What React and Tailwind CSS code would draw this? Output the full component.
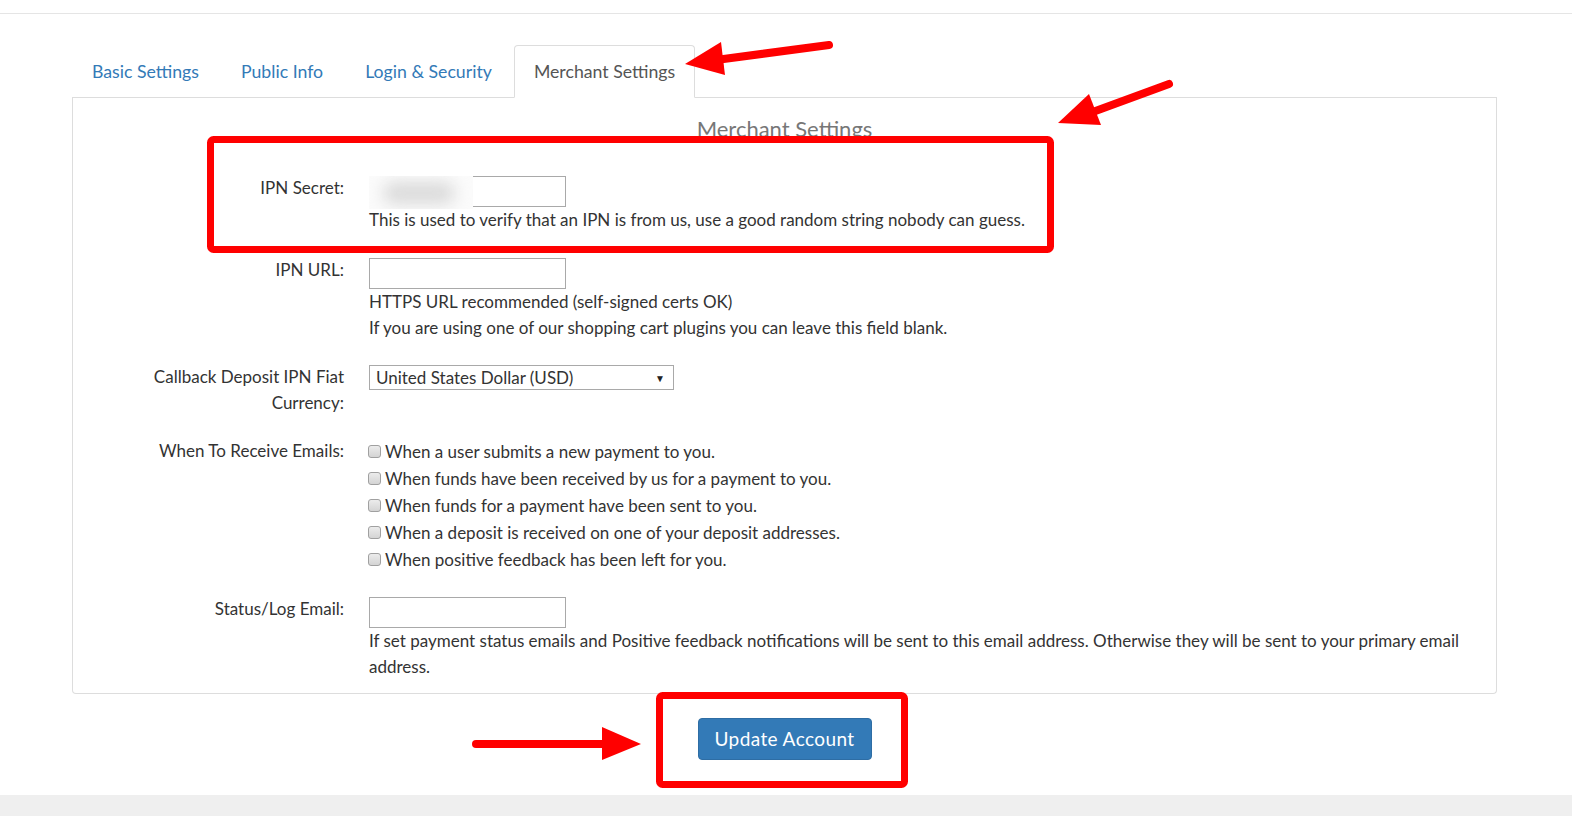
import React from 'react';

const tabs = ['Basic Settings', 'Public Info', 'Login & Security', 'Merchant Settings'];

const emailOptions = [
  'When a user submits a new payment to you.',
  'When funds have been received by us for a payment to you.',
  'When funds for a payment have been sent to you.',
  'When a deposit is received on one of your deposit addresses.',
  'When positive feedback has been left for you.'
];

// one label/field row of the settings form
const FormRow = ({ label, children, className = '' }) => (
  <div className={`flex items-start ${className}`}>
    <div className="w-[256px] ml-[15px] text-right leading-[26px]">{label}</div>
    <div className="flex-1 ml-[25px] mr-[14px] leading-[26px]">{children}</div>
  </div>
);

const TextInput = () => (
  <div className="mt-px w-[197px] h-[31px] border border-[#a9a9a9] bg-white" />
);

const Annotations = () => (
  <svg className="absolute left-0 top-0 pointer-events-none" width="1572" height="816">
    <g fill="#ff0000" stroke="#ff0000">
      <rect x="210.5" y="139.5" width="840" height="110" rx="3" fill="none" strokeWidth="7" />
      <rect x="659.5" y="695.5" width="245" height="89" rx="3" fill="none" strokeWidth="7" />

      <line x1="829" y1="45" x2="716" y2="60" strokeWidth="8" strokeLinecap="round" />
      <polygon points="685,64 721,42 725,75" stroke="none" />

      <line x1="1169" y1="84" x2="1090" y2="113" strokeWidth="8" strokeLinecap="round" />
      <polygon points="1058,123 1089,94 1101,125" stroke="none" />

      <line x1="476" y1="744" x2="606" y2="744" strokeWidth="8" strokeLinecap="round" />
      <polygon points="602,727 602,760 641,744" stroke="none" />
    </g>
  </svg>
);

export default function App() {
  return (
    <div className="relative w-full h-[816px] bg-white overflow-hidden text-[17px] text-[#333] font-['Lato','Liberation_Sans',sans-serif]">
      {/* top rule */}
      <div className="h-[14px] border-b border-[#e5e5e5]" />

      <div className="ml-[72px] w-[1425px]">
        {/* tabs */}
        <ul className="mt-[31px] flex border-b border-[#ddd]">
          {tabs.map((tab) => {
            const active = tab === 'Merchant Settings';
            return (
              <li key={tab} className="-mb-px mr-[2px]">
                <span
                  className={`flex items-center h-[53px] pt-[2px] px-[19px] border rounded-t-[4px] text-[17.7px] ${
                    active ? 'border-[#ddd] border-b-white bg-white text-[#555]' : 'border-transparent text-[#337ab7]'
                  }`}
                >
                  {tab}
                </span>
              </li>
            );
          })}
        </ul>

        {/* panel */}
        <div className="border border-t-0 border-[#ddd] rounded-b-[4px] pt-[18px] pb-[13px]">
          <h3 className="text-center text-[22px] leading-[26px] text-[#777] mb-[33px]">Merchant Settings</h3>

          <FormRow label="IPN Secret:" className="mb-[24px]">
            <div className="relative w-[197px]">
              <TextInput />
              <div className="absolute left-0 top-0 w-[104px] h-[33px] bg-[#fbfbfb] overflow-hidden">
                <div className="absolute left-[14px] top-[6px] w-[72px] h-[22px] rounded-full bg-[#dadada] blur-[8px]" />
              </div>
            </div>
            <div>This is used to verify that an IPN is from us, use a good random string nobody can guess.</div>
          </FormRow>

          <FormRow label="IPN URL:" className="mb-[23px]">
            <TextInput />
            <div>HTTPS URL recommended (self-signed certs OK)</div>
            <div>If you are using one of our shopping cart plugins you can leave this field blank.</div>
          </FormRow>

          <FormRow
            label={
              <>
                Callback Deposit IPN Fiat
                <br />
                Currency:
              </>
            }
            className="mb-[22px]"
          >
            <div className="mt-px w-[305px] h-[25px] border border-[#a9a9a9] bg-white flex items-center justify-between pl-[6px] pr-[8px] leading-[22px]">
              <span>United States Dollar (USD)</span>
              <span className="text-[10px] text-[#222]">▼</span>
            </div>
          </FormRow>

          <FormRow label="When To Receive Emails:" className="mb-[23px]">
            <div className="leading-[27px]">
              {emailOptions.map((opt) => (
                <label key={opt} className="flex items-center -ml-px">
                  <span className="w-[13px] h-[13px] mr-[4px] rounded-[3px] border border-[#a0a0a0] bg-gradient-to-b from-[#ececec] to-[#d4d4d4]" />
                  <span>{opt}</span>
                </label>
              ))}
            </div>
          </FormRow>

          <FormRow label="Status/Log Email:">
            <TextInput />
            <div>
              If set payment status emails and Positive feedback notifications will be sent to this email address. Otherwise they will be sent to your primary email address.
            </div>
          </FormRow>
        </div>

        {/* submit */}
        <div className="flex justify-center mt-[24px]">
          <button
            type="button"
            className="w-[174px] h-[42px] rounded-[4px] bg-[#337ab7] border border-[#2e6da4] text-white text-[19px] tracking-[0.4px]"
          >
            Update Account
          </button>
        </div>
      </div>

      {/* footer strip */}
      <div className="absolute left-0 bottom-0 w-full h-[21px] bg-[#efefef]" />

      <Annotations />
    </div>
  );
}
